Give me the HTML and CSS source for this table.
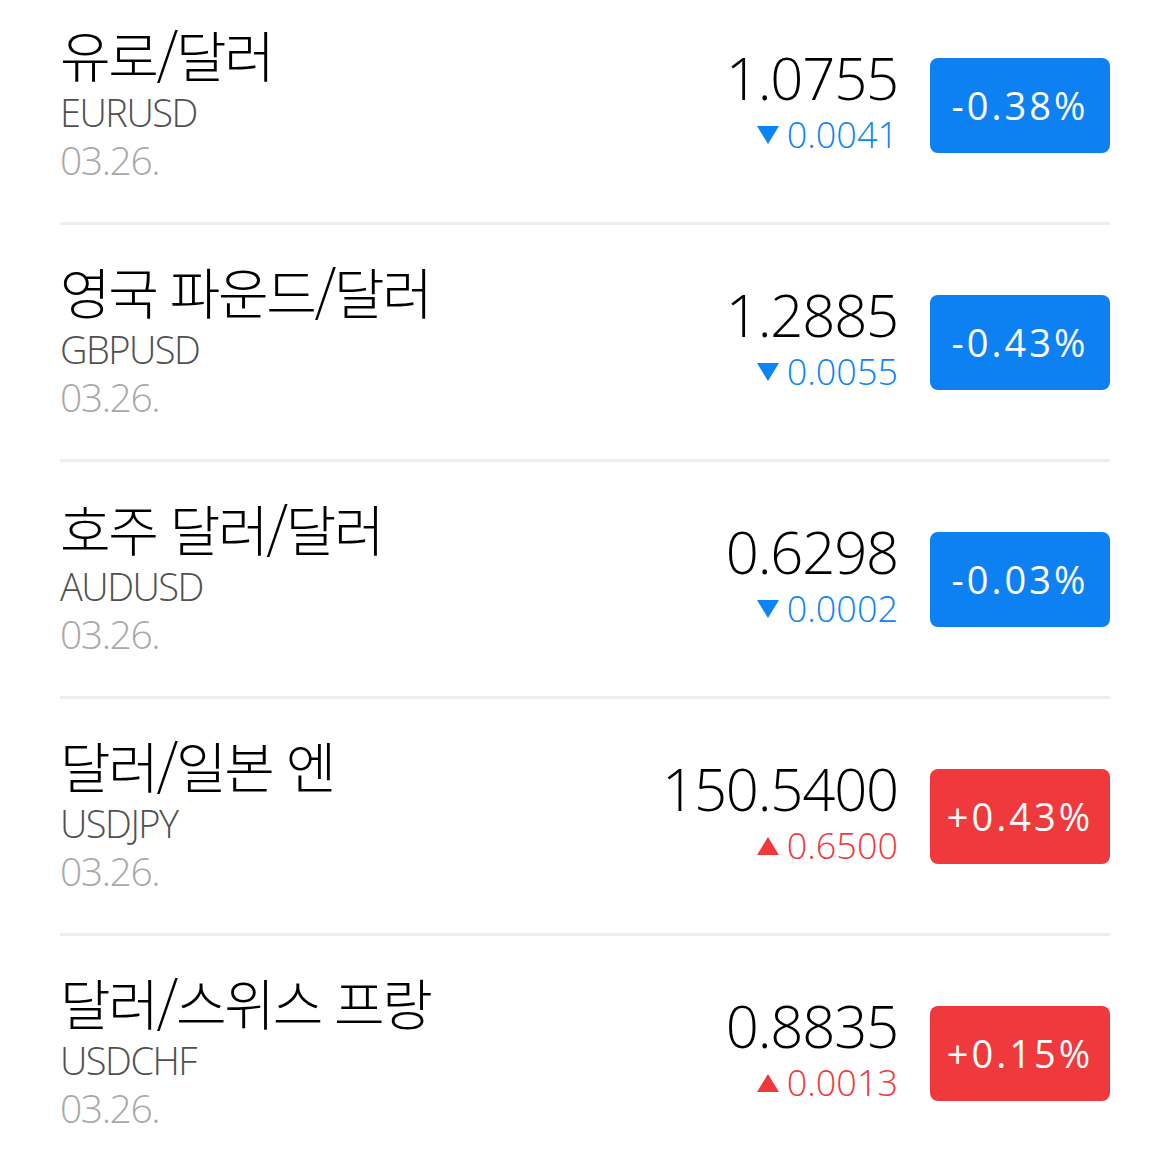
FILE: index.html
```html
<!DOCTYPE html>
<html lang="ko">
<head>
<meta charset="utf-8">
<link rel="stylesheet" href="styles.css">
</head>
<body>
<ul class="list">
  <li class="row">
    <div class="info">
      <div class="name">유로/달러</div>
      <div class="code">EURUSD</div>
      <div class="date">03.26.</div>
    </div>
    <div class="quote">
      <div class="price">1.0755</div>
      <div class="change down"><span class="tri"></span>0.0041</div>
    </div>
    <div class="badge down">-0.38%</div>
  </li>
  <li class="row">
    <div class="info">
      <div class="name">영국 파운드/달러</div>
      <div class="code">GBPUSD</div>
      <div class="date">03.26.</div>
    </div>
    <div class="quote">
      <div class="price">1.2885</div>
      <div class="change down"><span class="tri"></span>0.0055</div>
    </div>
    <div class="badge down">-0.43%</div>
  </li>
  <li class="row">
    <div class="info">
      <div class="name">호주 달러/달러</div>
      <div class="code">AUDUSD</div>
      <div class="date">03.26.</div>
    </div>
    <div class="quote">
      <div class="price">0.6298</div>
      <div class="change down"><span class="tri"></span>0.0002</div>
    </div>
    <div class="badge down">-0.03%</div>
  </li>
  <li class="row">
    <div class="info">
      <div class="name">달러/일본 엔</div>
      <div class="code">USDJPY</div>
      <div class="date">03.26.</div>
    </div>
    <div class="quote">
      <div class="price">150.5400</div>
      <div class="change up"><span class="tri"></span>0.6500</div>
    </div>
    <div class="badge up">+0.43%</div>
  </li>
  <li class="row">
    <div class="info">
      <div class="name">달러/스위스 프랑</div>
      <div class="code">USDCHF</div>
      <div class="date">03.26.</div>
    </div>
    <div class="quote">
      <div class="price">0.8835</div>
      <div class="change up"><span class="tri"></span>0.0013</div>
    </div>
    <div class="badge up">+0.15%</div>
  </li>
</ul>
</body>
</html>
```
FILE: styles.css
```css
html, body {
  margin: 0;
  padding: 0;
  background: #fff;
  overflow: hidden;
}
body {
  font-family: "Open Sans", "Noto Sans CJK KR", sans-serif;
  color: #000;
}
.list {
  list-style: none;
  margin: -12px 0 0;
  padding: 0 60px;
}
.row {
  display: flex;
  align-items: center;
  height: 234px;
  border-bottom: 3px solid #eeeeee;
}
.row:last-child {
  border-bottom: none;
}
.info {
  flex: 1;
  display: flex;
  flex-direction: column;
  margin-bottom: 9px;
}
.name {
  font-family: "Noto Sans CJK KR", sans-serif;
  font-size: 55px;
  font-weight: 300;
  line-height: 70px;
  letter-spacing: -2.3px;
}
.code {
  font-size: 38px;
  font-weight: 300;
  line-height: 48px;
  letter-spacing: -1.5px;
  color: #505050;
}
.date {
  font-size: 39px;
  font-weight: 300;
  line-height: 47px;
  letter-spacing: -1.4px;
  color: #a8a8a8;
}
.quote {
  display: flex;
  flex-direction: column;
  align-items: flex-end;
  margin-right: 32px;
  margin-bottom: 7px;
}
.price {
  font-size: 58px;
  font-weight: 300;
  line-height: 62px;
  letter-spacing: -1.2px;
  margin-bottom: 4px;
}
.change {
  font-size: 36px;
  font-weight: 300;
  line-height: 44px;
  display: flex;
  align-items: center;
}
.change.down { color: #0b84f5; }
.change.up { color: #f0383b; }
.tri {
  width: 0;
  height: 0;
  margin-right: 8px;
  border-left: 11.5px solid transparent;
  border-right: 11.5px solid transparent;
}
.change.down .tri { border-top: 18px solid #0b84f5; }
.change.up .tri { border-bottom: 18px solid #f0383b; }
.badge {
  width: 180px;
  height: 95px;
  border-radius: 8px;
  color: #fff;
  font-size: 38px;
  font-weight: 500;
  letter-spacing: 3px;
  display: flex;
  align-items: center;
  justify-content: center;
}
.badge.down { background: #0d80f2; }
.badge.up { background: #ef393c; }
```
